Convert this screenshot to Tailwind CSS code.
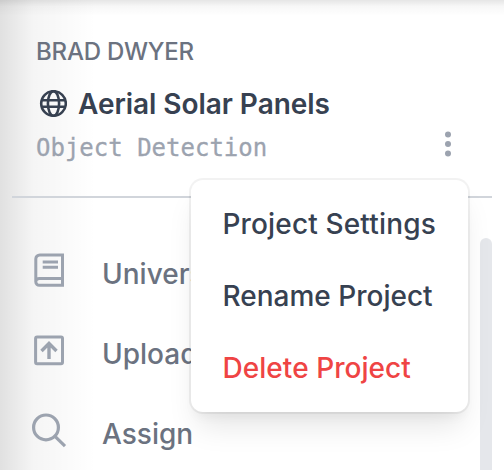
<!DOCTYPE html>
<html lang="en">
  <head>
    <meta charset="UTF-8" />
    <meta name="viewport" content="width=device-width, initial-scale=1.0" />
    <title>Aerial Solar Panels</title>
    <script src="https://cdn.jsdelivr.net/npm/@tailwindcss/browser@4"></script>
  </head>
  <body
    class="relative w-[504px] h-[470px] overflow-hidden bg-white font-['Inter',sans-serif] text-[#374151] antialiased"
  >
    <!-- Edge shadows -->
    <div
      class="absolute inset-y-0 left-0 w-24 bg-linear-to-r from-black/12 from-0% via-black/4 via-35% to-transparent"
    ></div>
    <div
      class="absolute inset-x-0 top-0 h-4 bg-linear-to-b from-black/10 via-black/3 via-40% to-transparent"
    ></div>

    <!-- Sidebar -->
    <aside class="relative pl-3 pr-3 pt-8">
      <!-- Project header -->
      <header class="relative h-[166px] border-b-2 border-[#d1d5db] pl-6">
        <p class="h-10 leading-10 text-2xl font-medium tracking-[-0.2px] text-[#6b7280]">BRAD DWYER</p>
        <h1 class="mt-3 flex h-10 items-center text-[28px] font-semibold tracking-[-0.05px]">
          <svg class="ml-[3px] mr-[11px] size-7" viewBox="0 0 28 28" fill="none" stroke="currentColor" stroke-width="2.6">
            <circle cx="14.5" cy="13.5" r="12.3" />
            <ellipse cx="14.5" cy="13.5" rx="5.6" ry="12.3" />
            <path d="M2.8 10.2h23.4M2.8 16.8h23.4" />
          </svg>
          Aerial Solar Panels
        </h1>
        <p
          class="mt-1 h-10 leading-10 font-['DejaVu_Sans_Mono',monospace] text-2xl text-[#9ca3af] [-webkit-text-stroke:0.3px]"
        >
          Object Detection
        </p>
        <button class="absolute right-[41px] top-[98px] text-[#9ca3af]" aria-label="Project menu">
          <svg class="h-7 w-1.5" viewBox="0 0 6 28" fill="currentColor">
            <circle cx="3" cy="4.5" r="3" />
            <circle cx="3" cy="14" r="3" />
            <circle cx="3" cy="23.5" r="3" />
          </svg>
        </button>
      </header>

      <!-- Navigation -->
      <nav class="flex flex-col gap-10 pl-[18px] pt-14 text-[28px] font-medium text-[#6b7280]">
        <a class="flex h-10 items-center gap-[34px]">
          <svg class="mb-2 size-[38px] shrink-0 text-[#9ca3af]" viewBox="0 0 38 38" fill="none" stroke="currentColor" stroke-width="3">
            <path d="M34 34.3H9.5a3.5 3.5 0 0 1-3.7-3.5V8a4 4 0 0 1 4-4h22.7v23.500H9.500a3.500 3.500 0 0 0-3.700 3.300M32.500 27.500v7" />
            <path d="M12.7 11H28M12.7 16.3H28" />
          </svg>
          Universe
        </a>
        <a class="flex h-10 items-center gap-[34px]">
          <svg class="mb-2 size-[38px] shrink-0 text-[#9ca3af]" viewBox="0 0 38 38" fill="none" stroke="currentColor" stroke-width="3">
            <rect x="5.6" y="6" width="26.900" height="26.700" rx="1.500" />
            <path d="M19 28V12.500M11.500 20l7.500-7.500 7.500 7.500" stroke-width="3.400" />
          </svg>
          Upload
        </a>
        <a class="flex h-10 items-center gap-[34px]">
          <svg class="mb-2 size-[38px] shrink-0 text-[#9ca3af]" viewBox="0 0 38 38" fill="none" stroke="currentColor" stroke-width="3.2">
            <circle cx="16" cy="16.4" r="12.4" />
            <path d="M25 25.400l10 9.800" />
          </svg>
          Assign
        </a>
      </nav>
    </aside>

    <!-- Scrollbar -->
    <div class="absolute left-[480px] top-[238px] h-60 w-3 rounded-full bg-[#e5e7eb]"></div>

    <!-- Project menu -->
    <ul
      class="absolute left-[191px] top-[180px] h-[232px] w-[277px] rounded-xl bg-white py-2 text-[28px] font-medium shadow-[0_0_0_2px_rgba(0,0,0,0.05),0_20px_30px_-6px_rgba(0,0,0,0.1),0_8px_12px_-4px_rgba(0,0,0,0.05)]"
    >
      <li class="pl-[31.5px] py-4 leading-10 tracking-[0.15px]">Project Settings</li>
      <li class="pl-[31.5px] py-4 leading-10">Rename Project</li>
      <li class="pl-[31.5px] py-4 leading-10 tracking-[0.05px] text-[#ef4444]">Delete Project</li>
    </ul>
  </body>
</html>
